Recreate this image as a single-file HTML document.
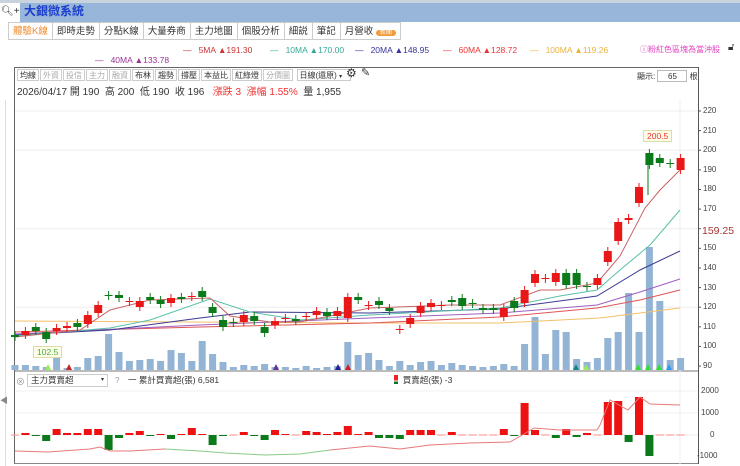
<!DOCTYPE html>
<html><head><meta charset="utf-8">
<style>
*{margin:0;padding:0;box-sizing:border-box}
body{width:740px;height:466px;overflow:hidden;background:#fff;font-family:"Liberation Sans","Noto Sans CJK TC",sans-serif;font-size:9px;color:#333;position:relative}
.abs{position:absolute;white-space:nowrap}
#hdr{left:0;top:0;width:740px;height:22px;background:#98b5da;border-top:3px solid #c9d3de}
#tabs{left:8px;top:22px;height:19px;display:flex}
#tabs div{border:1px solid #ccc;border-left:none;padding:0 4px;height:18px;line-height:17px;font-size:9.5px;color:#333;background:#fff}
#tabs div:first-child{border-left:1px solid #ccc;color:#f08a2a}
.tb{display:inline-block;border:1px solid #ccc;padding:0 2px;height:12px;line-height:11px;font-size:8px;margin-right:1px;color:#333}
.tb.g{color:#aaa}
</style></head><body>
<div class="abs" id="hdr"></div>
<div class="abs" style="left:0;top:3px;width:20px;height:19px;background:#fff;font-size:10px;line-height:18px;padding-left:1px">🔍︎+</div>
<div class="abs" style="left:24px;top:4px;font-size:12px;font-weight:bold;color:#1b3fcc;line-height:15px">大銀微系統</div>
<div class="abs" id="tabs"><div>體驗K線</div><div>即時走勢</div><div>分點K線</div><div>大量券商</div><div>主力地圖</div><div>個股分析</div><div>細説</div><div>筆記</div><div>月營收 <span style="background:#f39a3a;color:#fff;border-radius:6px;padding:0 4px;font-size:6px">新聞</span></div></div>

<div class="abs" style="top:45px;left:183px;font-size:8.5px;color:#c33"><span style="color:#b33">—</span>&nbsp;&nbsp; 5MA ▲191.30</div>
<div class="abs" style="top:45px;left:270px;font-size:8.5px;color:#3a9;">—&nbsp;&nbsp; 10MA ▲170.00</div>
<div class="abs" style="top:45px;left:355px;font-size:8.5px;color:#339;">—&nbsp;&nbsp; 20MA ▲148.95</div>
<div class="abs" style="top:45px;left:443px;font-size:8.5px;color:#e33;">—&nbsp;&nbsp; 60MA ▲128.72</div>
<div class="abs" style="top:45px;left:530px;font-size:8.5px;color:#e9b33a;">—&nbsp;&nbsp; 100MA ▲119.26</div>
<div class="abs" style="top:44px;left:640px;font-size:8px;color:#e040c0;">ⓘ粉紅色區塊為當沖股</div>
<div class="abs" style="top:42px;left:728px;font-size:10px;">🔓︎</div>
<div class="abs" style="top:55px;left:95px;font-size:8.5px;color:#939;">—&nbsp;&nbsp; 40MA ▲133.78</div>

<div class="abs" style="left:14px;top:67px;width:685px;height:397px;border:1px solid #666;border-right:none;border-bottom:1px solid #888"></div>
<div class="abs" style="left:5px;top:100px;width:1px;height:366px;background:#ddd"></div>
<div class="abs" style="left:0;top:395px;font-size:8px;color:#888">◀</div>

<div class="abs" style="left:17px;top:69px"><span class="tb">均線</span><span class="tb g">外資</span><span class="tb g">投信</span><span class="tb g">主力</span><span class="tb g">融資</span><span class="tb">布林</span><span class="tb">趨勢</span><span class="tb">撐壓</span><span class="tb">本益比</span><span class="tb">紅綠燈</span><span class="tb g">分價圖</span> <span class="tb" style="width:54px">日線(還原)&nbsp;<span style="font-size:6px">▾</span></span></div>
<div class="abs" style="left:346px;top:66px;font-size:12px">⚙︎</div>
<div class="abs" style="left:361px;top:66px;font-size:11px">✎</div>
<div class="abs" style="left:637px;top:70px;font-size:8px">顯示: <span style="display:inline-block;border:1px solid #bbb;width:30px;text-align:center;height:12px;line-height:11px">65</span> 根</div>
<div class="abs" style="left:17px;top:83px;font-size:10px;color:#333">2026/04/17 開 190 &nbsp;高 200 &nbsp;低 190 &nbsp;收 196 &nbsp;&nbsp;<span style="color:#e33">漲跌 3 &nbsp;漲幅 1.55%</span> &nbsp;量 1,955</div>

<svg class="abs" style="left:0;top:0" width="740" height="466" id="sv"></svg>

<div class="abs" style="left:703px;top:106px;font-size:8px;line-height:10px;color:#444" id="yl"></div>
<div class="abs" style="left:702px;top:225px;font-size:10.5px;color:#a33">159.25</div>
<div class="abs" style="left:643px;top:130px;font-size:8.5px;color:#e33;background:#fffde8;border:1px solid #dda;padding:0 3px">200.5</div>
<div class="abs" style="left:33px;top:346px;font-size:8.5px;color:#4a4;background:#fffde8;border:1px solid #dda;padding:0 3px">102.5</div>

<div class="abs" style="left:16px;top:375px;font-size:9px;color:#999">⊗</div>
<div class="abs" style="left:27px;top:374px;width:81px;height:13px;border:1px solid #ccc;font-size:8.5px;line-height:11px;padding-left:3px">主力買賣超<span style="float:right;font-size:6px;padding-right:3px">▾</span></div>
<div class="abs" style="left:115px;top:376px;font-size:8px;color:#89a">?</div>
<div class="abs" style="left:128px;top:374px;font-size:8.5px">一 累計買賣超(張) 6,581</div>
<div class="abs" style="left:394px;top:374px;font-size:8.5px"><span style="display:inline-block;width:4px;height:9px;background:linear-gradient(#e22 60%,#fff 60%,#fff 70%,#073 70%);vertical-align:-1px"></span>&nbsp; 買賣超(張) -3</div>
<div class="abs" style="left:701px;top:386px;font-size:8px;line-height:10px;color:#444">2000</div>
<div class="abs" style="left:701px;top:408px;font-size:8px;color:#444">1000</div>
<div class="abs" style="left:710px;top:430px;font-size:8px;color:#444">0</div>
<div class="abs" style="left:697px;top:451px;font-size:8px;color:#444">-1000</div>

<script>
var yl=document.getElementById('yl');var h='';
for(var p=220;p>=90;p-=10){if(p==160)continue;h+='<div style="position:absolute;top:'+((220-p)*1.962)+'px">'+p+'</div>';}yl.innerHTML=h;
var s='';
function Y(p){return 111+(220-p)*1.962}
[220,200,160,120].forEach(function(p){s+='<line x1="15" x2="698" y1="'+Y(p)+'" y2="'+Y(p)+'" stroke="#eee"/>'});
s+='<line x1="698.5" x2="698.5" y1="67" y2="464" stroke="#555"/>';
s+='<line x1="15" x2="698" y1="371" y2="371" stroke="#777"/>';
s+='<line x1="680" x2="680" y1="100" y2="464" stroke="#eee"/>';
for(var p=220;p>=90;p-=10)s+='<line x1="698" x2="701" y1="'+Y(p)+'" y2="'+Y(p)+'" stroke="#555"/>';
s+='<line x1="15" x2="698" y1="391" y2="391" stroke="#f2f2f2"/><line x1="15" x2="698" y1="413" y2="413" stroke="#f2f2f2"/><line x1="15" x2="698" y1="435" y2="435" stroke="#eee"/>';
var vol=[365,365,366,367,358,368,367,358,356,334,352,361,360,359,361,350,353,361,341,354,362,367,365,366,364,367,367,368,366,368,367,366,342,355,353,360,366,361,365,362,361,365,363,365,366,367,366,364,366,344,317,354,330,332,359,362,358,338,332,293,332,247,301,360,358];
function X(i){return 15+i*10.4}
vol.forEach(function(t,i){s+='<rect x="'+(X(i)-3.5)+'" y="'+t+'" width="7" height="'+(370-t)+'" fill="#93b4d4"/>'});
var c=[[335,337,'g'],[331,335,'r'],[327,331,'g'],[332,339,'g'],[328,331,'r'],[326,328,'r'],[323,327,'g'],[315,324,'r'],[305,313,'r'],[295,296,'g'],[295,298,'g'],[301,302,'r'],[301,307,'r'],[297,300,'g'],[300,304,'g'],[298,303,'r'],[297,299,'g'],[296,297,'r'],[291,297,'g'],[307,313,'g'],[320,327,'g'],[322,323,'g'],[315,322,'r'],[316,321,'g'],[327,333,'g'],[321,325,'r'],[318,319,'r'],[319,321,'g'],[316,317,'r'],[311,315,'r'],[312,316,'g'],[311,316,'r'],[297,318,'r'],[297,300,'g'],[305,306,'r'],[301,305,'g'],[308,311,'g'],[329,330,'r'],[318,324,'r'],[306,313,'r'],[303,307,'r'],[305,306,'r'],[300,302,'g'],[298,306,'g'],[303,304,'g'],[308,310,'g'],[308,310,'g'],[308,317,'r'],[301,308,'g'],[290,303,'r'],[274,283,'r'],[278,279,'r'],[273,282,'r'],[273,285,'g'],[273,285,'g'],[286,287,'g'],[278,285,'r'],[251,262,'r'],[222,241,'r'],[218,220,'r'],[187,203,'r'],[153,165,'g'],[158,163,'g'],[163,164,'g'],[158,170,'r']];
function pl(pts,col){s+='<polyline fill="none" stroke="'+col+'" stroke-width="1" points="'+pts.map(function(p){return p.join(',')}).join(' ')+'"/>'}
pl([[15,321],[370,323],[500,323],[600,318],[680,308]],'#f2c06a');
pl([[15,332],[200,327],[370,323],[500,317],[597,308],[640,300],[680,290]],'#e05555');
pl([[15,334],[200,325],[370,318],[500,313],[597,305],[640,292],[680,279]],'#a060c0');
pl([[15,335],[110,330],[200,318],[250,312],[370,313],[500,309],[597,296],[640,270],[680,251]],'#3a3a90');
pl([[15,336],[110,328],[150,320],[210,299],[250,312],[300,320],[370,315],[500,308],[560,296],[597,290],[620,270],[650,245],[680,210]],'#5abfaa');
pl([[15,337],[80,330],[110,310],[150,300],[210,298],[230,316],[270,322],[300,322],[340,314],[370,308],[450,305],[500,305],[540,290],[560,290],[597,283],[620,256],[645,208],[660,190],[680,170]],'#c86464');
c.forEach(function(d,i){var x=X(i),col=d[2]=='r'?'#e81818':'#0a7a1a';
 s+='<line x1="'+x+'" x2="'+x+'" y1="'+(d[0]-4)+'" y2="'+(d[1]+4)+'" stroke="'+col+'"/>';
 s+='<rect x="'+(x-4)+'" y="'+d[0]+'" width="8" height="'+Math.max(1,d[1]-d[0])+'" fill="'+col+'"/>';});
s+='<line x1="648" x2="648" y1="165" y2="195" stroke="#0a7a1a"/>';
var lb=[0,-2,1,6,-6,-2,-2,-6,-6,15,3,-2,-4,1,-1,4,-1,-7,-1,10,1,0,-3,1,5,-5,-1,0,-4,-3,-1,-3,-9,-1,-3,3,3,4,-5,-5,-5,0,-3,0,0,0,0,-6,1,-32,-5,0,3,-6,2,-2,0,-33,-34,7,-38,21,0,0,0];
lb.forEach(function(v,i){if(v==0){s+='<line x1="'+(X(i)-4)+'" x2="'+(X(i)+4)+'" y1="435" y2="435" stroke="#f88"/>';return}
 var col=v<0?'#ee1111':'#0a7a1a';var y=v<0?435+v:435;s+='<rect x="'+(X(i)-4)+'" y="'+y+'" width="8" height="'+Math.abs(v)+'" fill="'+col+'"/>'});
var ln=[[15,451],[48,452],[90,449],[100,447],[110,451],[130,451],[165,449],[200,451],[225,453],[265,455],[300,454],[330,450],[370,446],[400,449],[430,445],[470,443],[510,442],[524,434],[534,428],[560,430],[597,430],[600,425],[610,400],[628,410],[640,397],[650,404],[680,405]];
s+='<polyline fill="none" stroke="#e87a7a" points="'+ln.slice(0,7).map(String).join(' ')+'"/>';
s+='<polyline fill="none" stroke="#8c8" points="'+ln.slice(6,12).map(String).join(' ')+'"/>';
s+='<polyline fill="none" stroke="#e87a7a" points="'+ln.slice(11).map(String).join(' ')+'"/>';
[[48,'#9e5'],[69,'#c22'],[276,'#639'],[338,'#229'],[348,'#c22'],[586,'#9e5'],[576,'#188'],[638,'#3d3'],[648,'#3d3'],[659,'#3d3'],[669,'#39e']].forEach(function(t){s+='<polygon points="'+(t[0]-3)+',370 '+(t[0]+3)+',370 '+t[0]+',364" fill="'+t[1]+'"/>'});
document.getElementById('sv').innerHTML=s;
</script>
</body></html>
